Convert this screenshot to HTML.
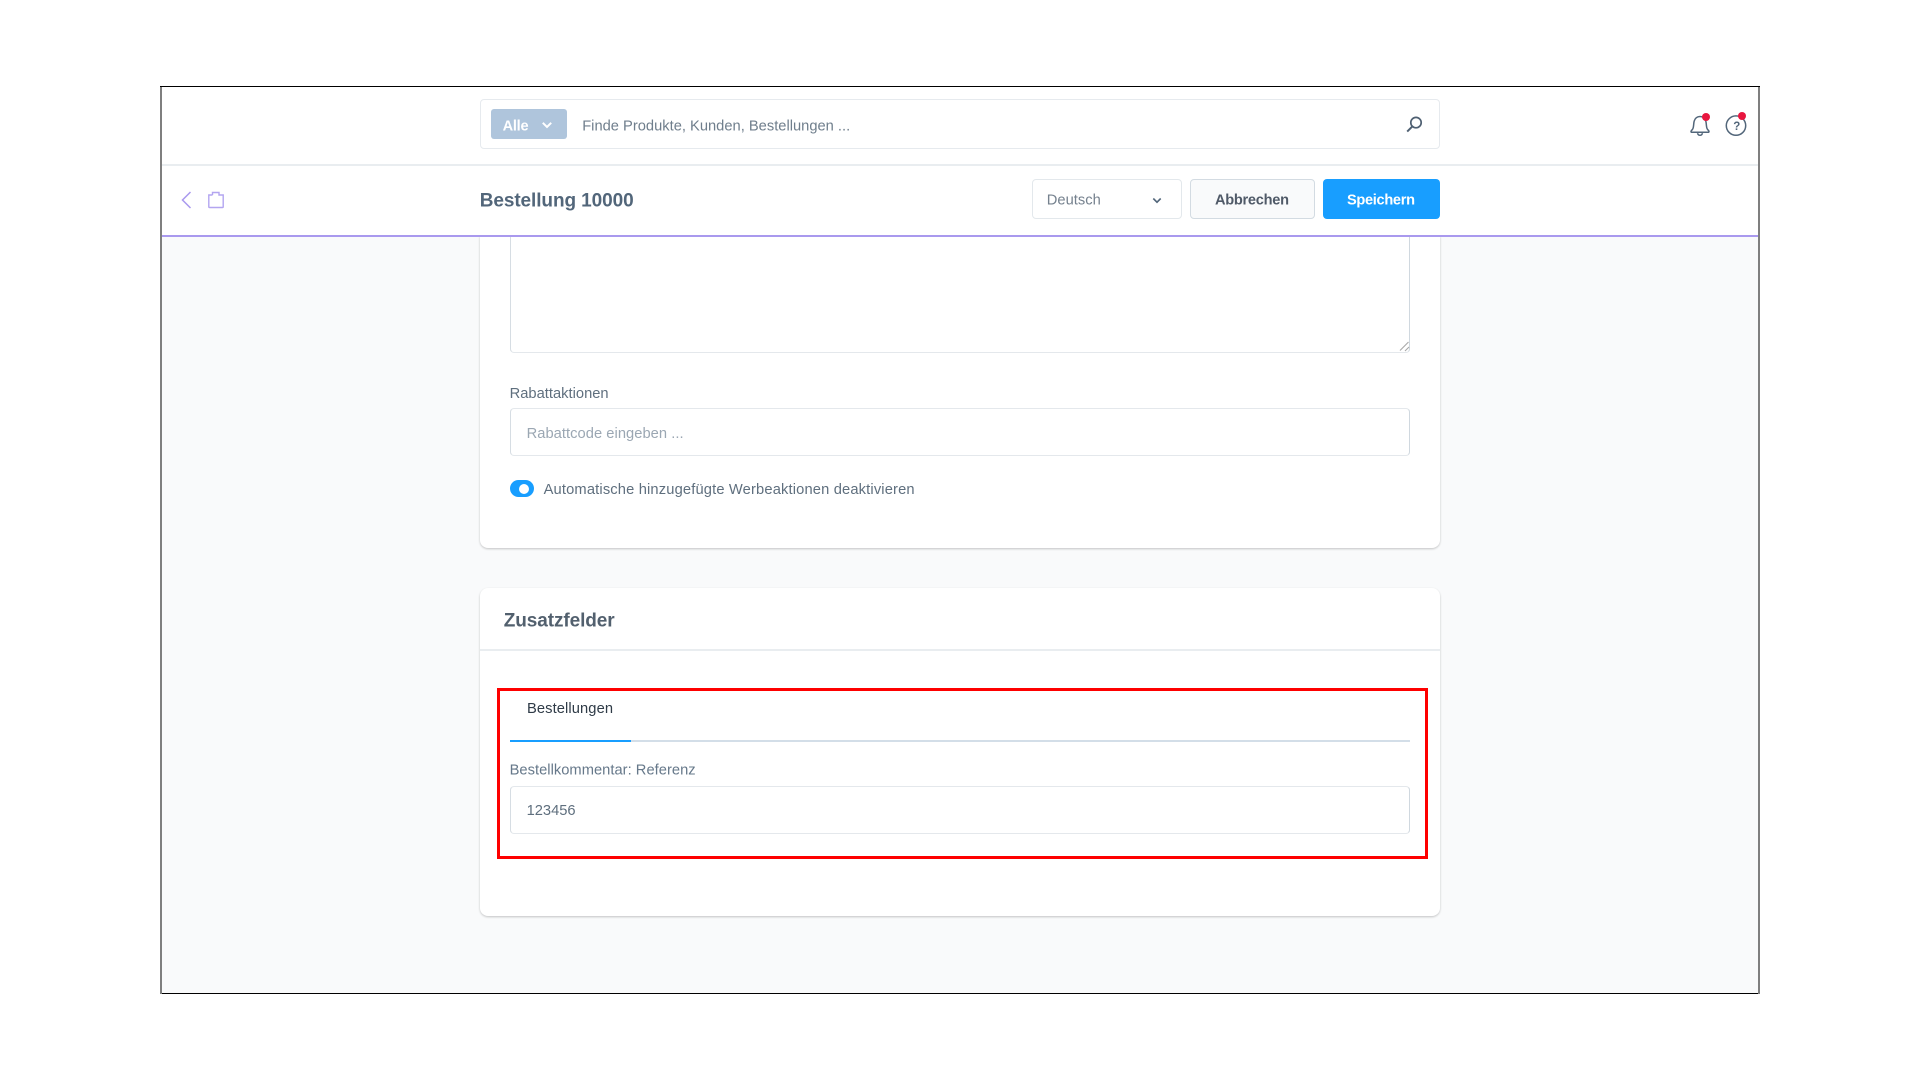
<!DOCTYPE html>
<html lang="de">
<head>
<meta charset="utf-8">
<title>Bestellung 10000</title>
<style>
html,body{margin:0;padding:0;width:1920px;height:1080px;background:#fff;overflow:hidden}
#p{position:absolute;left:0;top:0;width:1920px;height:1080px;filter:blur(.35px)}
.b{position:absolute;box-sizing:border-box}
svg{position:absolute;left:0;top:0}
text{font-family:"Liberation Sans",sans-serif}
</style>
</head>
<body>
<div id="p">
<div class="b" style="left:162px;top:236px;width:1596px;height:757px;background:#f9fafb"></div>

<!-- card 1 -->
<div class="b" style="left:480px;top:236px;width:960px;height:312px;background:#fff;border-radius:0 0 8px 8px;box-shadow:0 1px 2px rgba(0,0,0,.22)"></div>
<div class="b" style="left:510px;top:230px;width:900px;height:122.5px;border:1.5px solid #e4e8ec;border-left-color:#d6dde3;border-right-color:#d0d8df;border-top:none;border-radius:0 0 4px 4px;background:#fff"></div>
<div class="b" style="left:510px;top:408px;width:900px;height:48px;border:1.5px solid #e4e8ec;border-left-color:#d6dde3;border-right-color:#d0d8df;border-radius:4px;background:#fff"></div>
<div class="b" style="left:510px;top:480px;width:24px;height:17px;border-radius:9px;background:#189eff"></div>
<div class="b" style="left:519px;top:483.5px;width:10px;height:10px;border-radius:50%;background:#fff"></div>

<!-- header -->
<div class="b" style="left:162px;top:87px;width:1596px;height:148px;background:#fff"></div>
<div class="b" style="left:162px;top:164px;width:1596px;height:2px;background:#e9edf0"></div>
<div class="b" style="left:162px;top:234.5px;width:1596px;height:2px;background:#a999ee"></div>
<div class="b" style="left:160px;top:86px;width:2px;height:908px;background:#7f7f7f"></div>
<div class="b" style="left:1758px;top:86px;width:2px;height:908px;background:#7f7f7f"></div>
<div class="b" style="left:160px;top:86px;width:1600px;height:1px;background:#000"></div>
<div class="b" style="left:162px;top:993px;width:1596px;height:1px;background:#000"></div>

<!-- search -->
<div class="b" style="left:480px;top:99px;width:960px;height:50px;border:1.5px solid #e6eaee;border-radius:4px;background:#fff"></div>
<div class="b" style="left:491px;top:109px;width:76px;height:30px;background:#afc5dc;border-radius:3px"></div>

<!-- toolbar controls -->
<div class="b" style="left:1032px;top:179px;width:150px;height:40px;border:1.5px solid #e3e8ec;border-radius:4px;background:#fff"></div>
<div class="b" style="left:1190px;top:179px;width:125px;height:40px;border:1.5px solid #d3dbe2;border-radius:4px;background:#f9fafb"></div>
<div class="b" style="left:1323px;top:179px;width:117px;height:40px;border-radius:4px;background:#189eff"></div>

<!-- card 2 -->
<div class="b" style="left:480px;top:588px;width:960px;height:328px;background:#fff;border-radius:8px;box-shadow:0 1px 2px rgba(0,0,0,.22)"></div>
<div class="b" style="left:480px;top:649px;width:960px;height:1.5px;background:#e9edf0"></div>
<div class="b" style="left:510px;top:739.5px;width:900px;height:2px;background:#d3dee8"></div>
<div class="b" style="left:510px;top:739.5px;width:121px;height:2px;background:#189eff"></div>
<div class="b" style="left:510px;top:786px;width:900px;height:47.5px;border:1.5px solid #e4e8ec;border-left-color:#d6dde3;border-right-color:#d0d8df;border-radius:4px;background:#fff"></div>
<div class="b" style="left:497px;top:687.5px;width:931px;height:171.5px;border:3px solid #fe0000"></div>

<svg width="1920" height="1080" viewBox="0 0 1920 1080" fill="none">
  <!-- top bar text -->
  <text x="502.6" y="130.4" font-size="14.6" font-weight="700" fill="#fff" textLength="26" lengthAdjust="spacing">Alle</text>
  <path d="M542.8 122.8l4.2 4.2 4.2-4.2" stroke="#fff" stroke-width="2"/>
  <text x="582.2" y="130.4" font-size="14.7" fill="#6f7e8c" textLength="268" lengthAdjust="spacing">Finde Produkte, Kunden, Bestellungen ...</text>
  <circle cx="1416" cy="122.6" r="5.2" stroke="#4f6072" stroke-width="1.7"/>
  <path d="M1412.2 126.6l-5 5" stroke="#4f6072" stroke-width="2"/>

  <!-- bell -->
  <path d="M1691 131.5c0-.9 1.2-1.4 1.9-2.8.9-1.9.6-5.2 1.3-7.6.8-2.8 3-4.6 5.8-4.6s5 1.8 5.8 4.6c.7 2.4.4 5.7 1.3 7.6.7 1.4 1.9 1.9 1.9 2.8 0 .5-.4.8-1 .8h-16c-.6 0-1-.3-1-.8z" stroke="#52667a" stroke-width="1.5"/>
  <path d="M1697.5 133.2c.4 1.4 1.4 2.1 2.5 2.1s2.1-.7 2.5-2.1" stroke="#52667a" stroke-width="1.5"/>
  <circle cx="1706" cy="117" r="4" fill="#e8163f"/>
  <!-- help -->
  <circle cx="1736" cy="125.6" r="9.7" stroke="#52667a" stroke-width="1.5"/>
  <text x="1733.2" y="130" font-size="11.5" font-weight="700" fill="#52667a">?</text>
  <circle cx="1742" cy="116" r="4" fill="#e8163f"/>

  <!-- toolbar -->
  <path d="M190.5 192l-8 8 8 8" stroke="#a999ee" stroke-width="1.5"/>
  <path d="M212.5 195v-2.5h6.5v2.5h4.2v11.7a.8.8 0 0 1-.8.8h-12.8a.8.8 0 0 1-.8-.8v-11.7h3.7" stroke="#b3a5f0" stroke-width="1.4"/>
  <text x="479.7" y="206.4" font-size="19" font-weight="700" fill="#52667a" textLength="154" lengthAdjust="spacing">Bestellung 10000</text>
  <text x="1046.8" y="204.4" font-size="14.7" fill="#75818e" textLength="54" lengthAdjust="spacing">Deutsch</text>
  <path d="M1153.3 198.5l3.7 3.7 3.7-3.7" stroke="#52667a" stroke-width="1.6"/>
  <text x="1215" y="204.4" font-size="14.6" font-weight="700" fill="#505a68" textLength="74" lengthAdjust="spacing">Abbrechen</text>
  <text x="1347" y="204.4" font-size="14.6" font-weight="700" fill="#fff" textLength="68" lengthAdjust="spacing">Speichern</text>

  <!-- resizer -->
  <path d="M1400 350.5l8.5-8.5M1405 351l4-4" stroke="#a8a8a8" stroke-width="1.1"/>

  <!-- card 1 text -->
  <text x="509.6" y="398" font-size="14.7" fill="#5f6f7e" textLength="99" lengthAdjust="spacing">Rabattaktionen</text>
  <text x="526.6" y="437.9" font-size="14.7" fill="#9ba7b3" textLength="157" lengthAdjust="spacing">Rabattcode eingeben ...</text>
  <text x="543.6" y="494" font-size="14.7" fill="#5f6f7e" textLength="371" lengthAdjust="spacing">Automatische hinzugefügte Werbeaktionen deaktivieren</text>

  <!-- card 2 text -->
  <text x="503.7" y="626.7" font-size="19" font-weight="700" fill="#52606e" textLength="111" lengthAdjust="spacing">Zusatzfelder</text>
  <text x="527" y="712.8" font-size="14.7" fill="#2f3b47" textLength="86" lengthAdjust="spacing">Bestellungen</text>
  <text x="509.6" y="774.5" font-size="14.7" fill="#66788a" textLength="186" lengthAdjust="spacing">Bestellkommentar: Referenz</text>
  <text x="526.6" y="815" font-size="14.7" fill="#5f6f7e" textLength="49" lengthAdjust="spacing">123456</text>
</svg>
</div>
</body>
</html>
